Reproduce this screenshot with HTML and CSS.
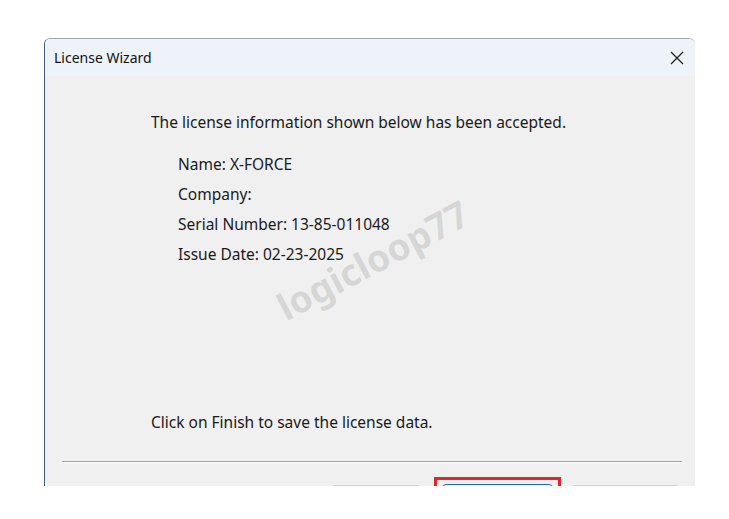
FILE: index.html
```html
<!DOCTYPE html>
<html>
<head>
<meta charset="utf-8">
<link rel="stylesheet" href="styles.css">
</head>
<body>
<div class="window">
  <div class="titlebar">
    <span class="title">License Wizard</span>
    <svg class="close" width="14" height="14" viewBox="0 0 14 14"><path d="M1 1 L13 13 M13 1 L1 13" stroke="#222" stroke-width="1.3" fill="none"/></svg>
  </div>
  <div class="content">
    <p class="lead">The license information shown below has been accepted.</p>
    <div class="info">
      <div class="row">Name: X-FORCE</div>
      <div class="row">Company:</div>
      <div class="row">Serial Number: 13-85-011048</div>
      <div class="row">Issue Date: 02-23-2025</div>
    </div>
    <p class="finish-note">Click on Finish to save the license data.</p>
    <div class="separator"></div>
    <div class="buttons">
      <div class="btn btn-back"></div>
      <div class="highlight"><div class="btn btn-finish"></div></div>
      <div class="btn btn-cancel"></div>
    </div>
  </div>
  <div class="watermark">logicloop77</div>
</div>
</body>
</html>
```

FILE: styles.css
```css
html, body {
  margin: 0;
  padding: 0;
  background: #ffffff;
}
body {
  padding: 38px 0 0 44px;
  font-family: "Noto Sans", "Open Sans", sans-serif;
  color: #1a1a1a;
}
.window {
  position: relative;
  width: 651px;
  height: 448px;
  border-left: 1px solid #3f5f88;
  border-top: 1px solid #9aa9ba;
  border-top-left-radius: 6px;
  border-top-right-radius: 6px;
  background: #f0f0f0;
  overflow: hidden;
  box-sizing: border-box;
}
.titlebar {
  height: 37px;
  background: #eef3f9;
  display: flex;
  align-items: center;
  justify-content: space-between;
  padding: 0 11px 0 9px;
}
.title {
  font-size: 14px;
  color: #111;
}
.close {
  display: block;
}
.content {
  padding: 0 0 0 106px;
}
.lead {
  margin: 35px 0 0 0;
  font-size: 15.5px;
  line-height: 22px;
}
.info {
  margin: 16px 0 0 27px;
}
.row {
  font-size: 15.5px;
  line-height: 30px;
}
.finish-note {
  margin: 142px 0 0 0;
  font-size: 15.5px;
  line-height: 22px;
}
.separator {
  margin: 28px 0 0 -89px;
  width: 620px;
  height: 1px;
  background: #a0a0a0;
  border-bottom: 1px solid #ffffff;
}
.buttons {
  display: flex;
  align-items: flex-start;
  margin: 14px 0 0 179px;
}
.btn {
  height: 20px;
  background: #fdfdfd;
  border: 1px solid #d0d0d0;
  border-radius: 4px;
  box-sizing: border-box;
}
.btn-back {
  width: 92px;
  margin-top: 8px;
}
.highlight {
  margin-left: 12px;
  width: 127px;
  height: 20px;
  border: 3px solid #e0262a;
  border-bottom: none;
  box-sizing: border-box;
  padding: 4px 0 0 5px;
}
.btn-finish {
  width: 111px;
  border: 1px solid #1f6bb5;
}
.btn-cancel {
  width: 110px;
  margin-top: 8px;
  margin-left: 9px;
}
.watermark {
  position: absolute;
  left: 222px;
  top: 196px;
  font-size: 37px;
  line-height: 49px;
  font-weight: bold;
  color: rgba(150, 150, 150, 0.28);
  transform: rotate(-28deg);
  transform-origin: center;
  pointer-events: none;
}
```
